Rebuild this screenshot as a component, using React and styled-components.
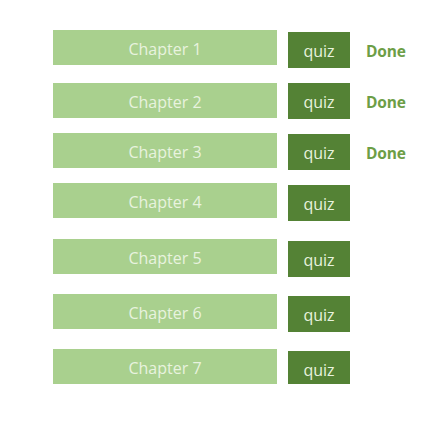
import React from "react";
import styled, { createGlobalStyle } from "styled-components";

const Global = createGlobalStyle`
  html, body { margin: 0; padding: 0; background: #ffffff; }
  body { font-family: "Open Sans", "Liberation Sans", sans-serif; }
`;

const List = styled.div`
  display: flex;
  flex-direction: column;
  padding: 30px 0 0 53px;
`;

const Row = styled.div`
  display: flex;
  align-items: flex-start;
  height: 35px;
  margin-top: ${(p) => p.$gap}px;
`;

const Chapter = styled.div`
  width: 224px;
  height: 35px;
  flex-shrink: 0;
  background: #a9d08e;
  color: #e8f3df;
  font-size: 16px;
  font-weight: 400;
  display: flex;
  align-items: center;
  justify-content: center;
  box-sizing: border-box;
  padding-top: 2px;
`;

const Quiz = styled.div`
  width: 62px;
  height: 36px;
  flex-shrink: 0;
  margin-left: 11px;
  margin-top: ${(p) => p.$offset}px;
  background: #548235;
  color: #e8f3df;
  font-size: 16px;
  display: flex;
  align-items: center;
  justify-content: center;
  box-sizing: border-box;
  padding-top: 2px;
`;

const Done = styled.div`
  margin-left: 16px;
  height: 36px;
  margin-top: ${(p) => p.$offset}px;
  display: flex;
  align-items: center;
  color: #6d9e46;
  font-weight: 700;
  font-size: 15.5px;
  letter-spacing: -0.2px;
  padding-top: 1px;
`;

const rows = [
  { n: 1, gap: 0, offset: 2, done: true },
  { n: 2, gap: 18, offset: 0, done: true },
  { n: 3, gap: 15, offset: 1, done: true },
  { n: 4, gap: 15, offset: 2, done: false },
  { n: 5, gap: 21, offset: 2, done: false },
  { n: 6, gap: 20, offset: 2, done: false },
  { n: 7, gap: 20, offset: 2, done: false },
];

export default function App() {
  return (
    <>
      <Global />
      <List>
        {rows.map((r) => (
          <Row key={r.n} $gap={r.gap}>
            <Chapter>Chapter {r.n}</Chapter>
            <Quiz $offset={r.offset}>quiz</Quiz>
            {r.done && <Done $offset={r.offset}>Done</Done>}
          </Row>
        ))}
      </List>
    </>
  );
}
